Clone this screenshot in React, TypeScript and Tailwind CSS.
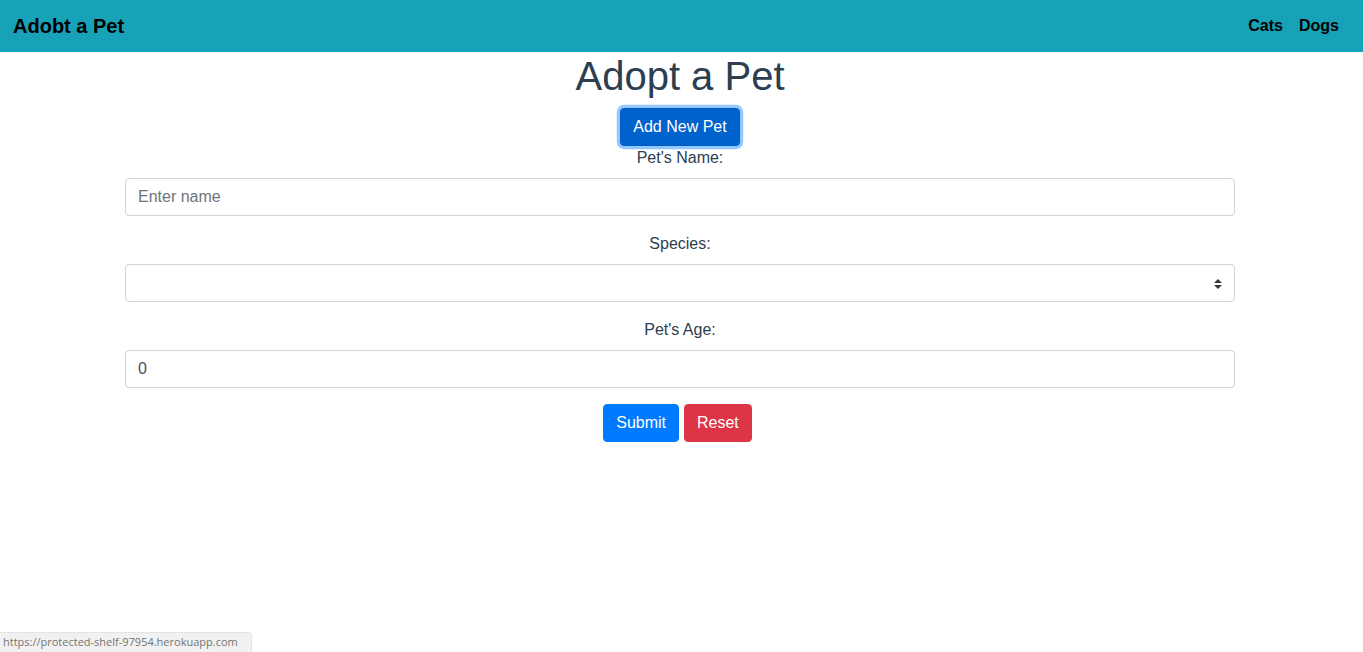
import React from "react";

export default function App() {
  const font = { fontFamily: '"Liberation Sans", Arial, Helvetica, sans-serif' };
  return (
    <div className="relative min-h-[652px] bg-white" style={font}>
      <nav className="flex h-[52px] items-center justify-between bg-[#17a2b8] pl-[13px] pr-4">
        <a className="text-[20px] font-bold leading-[30px] text-black">Adobt a Pet</a>
        <div className="flex">
          <a className="px-2 text-[16px] font-bold leading-6 text-black">Cats</a>
          <a className="px-2 text-[16px] font-bold leading-6 text-black">Dogs</a>
        </div>
      </nav>
      <div className="pr-[3px]">
        <div className="mx-auto w-[1110px] text-center text-[#2c3e50]">
          <h1 className="mb-2 text-[40px] font-normal leading-[48px]">Adopt a Pet</h1>
          <button className="h-[38px] rounded border border-[#005cbf] bg-[#0062cc] px-3 text-[16px] leading-6 text-white shadow-[0_0_0_3.2px_rgba(38,143,255,0.5)]">
            Add New Pet
          </button>
          <form className="text-left">
            <div className="mb-4">
              <label className="mb-2 block text-center text-[16px] leading-6">Pet's Name:</label>
              <input
                className="block h-[38px] w-full rounded border border-[#ced4da] px-3 text-[16px] text-[#495057] placeholder:text-[#6c757d] outline-none"
                placeholder="Enter name"
              />
            </div>
            <div className="mb-4">
              <label className="mb-2 block text-center text-[16px] leading-6">Species:</label>
              <div className="relative flex h-[38px] w-full items-center rounded border border-[#ced4da]">
                <svg className="absolute right-3 top-[14px]" width="8" height="10" viewBox="0 0 4 5">
                  <path fill="#343a40" d="M2 0L0 2h4zm0 5L0 3h4z" />
                </svg>
              </div>
            </div>
            <div className="mb-4">
              <label className="mb-2 block text-center text-[16px] leading-6">Pet's Age:</label>
              <input
                className="block h-[38px] w-full rounded border border-[#ced4da] px-3 text-[16px] text-[#495057] outline-none"
                defaultValue="0"
              />
            </div>
            <div className="flex justify-center gap-[5px] pr-[5px]">
              <button
                type="button"
                className="h-[38px] rounded border border-[#007bff] bg-[#007bff] px-3 text-[16px] leading-6 text-white"
              >
                Submit
              </button>
              <button
                type="button"
                className="h-[38px] rounded border border-[#dc3545] bg-[#dc3545] px-3 text-[16px] leading-6 text-white"
              >
                Reset
              </button>
            </div>
          </form>
        </div>
      </div>
      <div
        className="absolute bottom-0 left-0 flex h-[20px] w-[252px] items-center rounded-tr border-t border-r border-[#e4e4e4] bg-[#f1f1f1] pl-[3px] text-[11px] text-[#757575]"
        style={{ fontFamily: '"Open Sans", "Noto Sans", sans-serif' }}
      >
        https://protected-shelf-97954.herokuapp.com
      </div>
    </div>
  );
}
